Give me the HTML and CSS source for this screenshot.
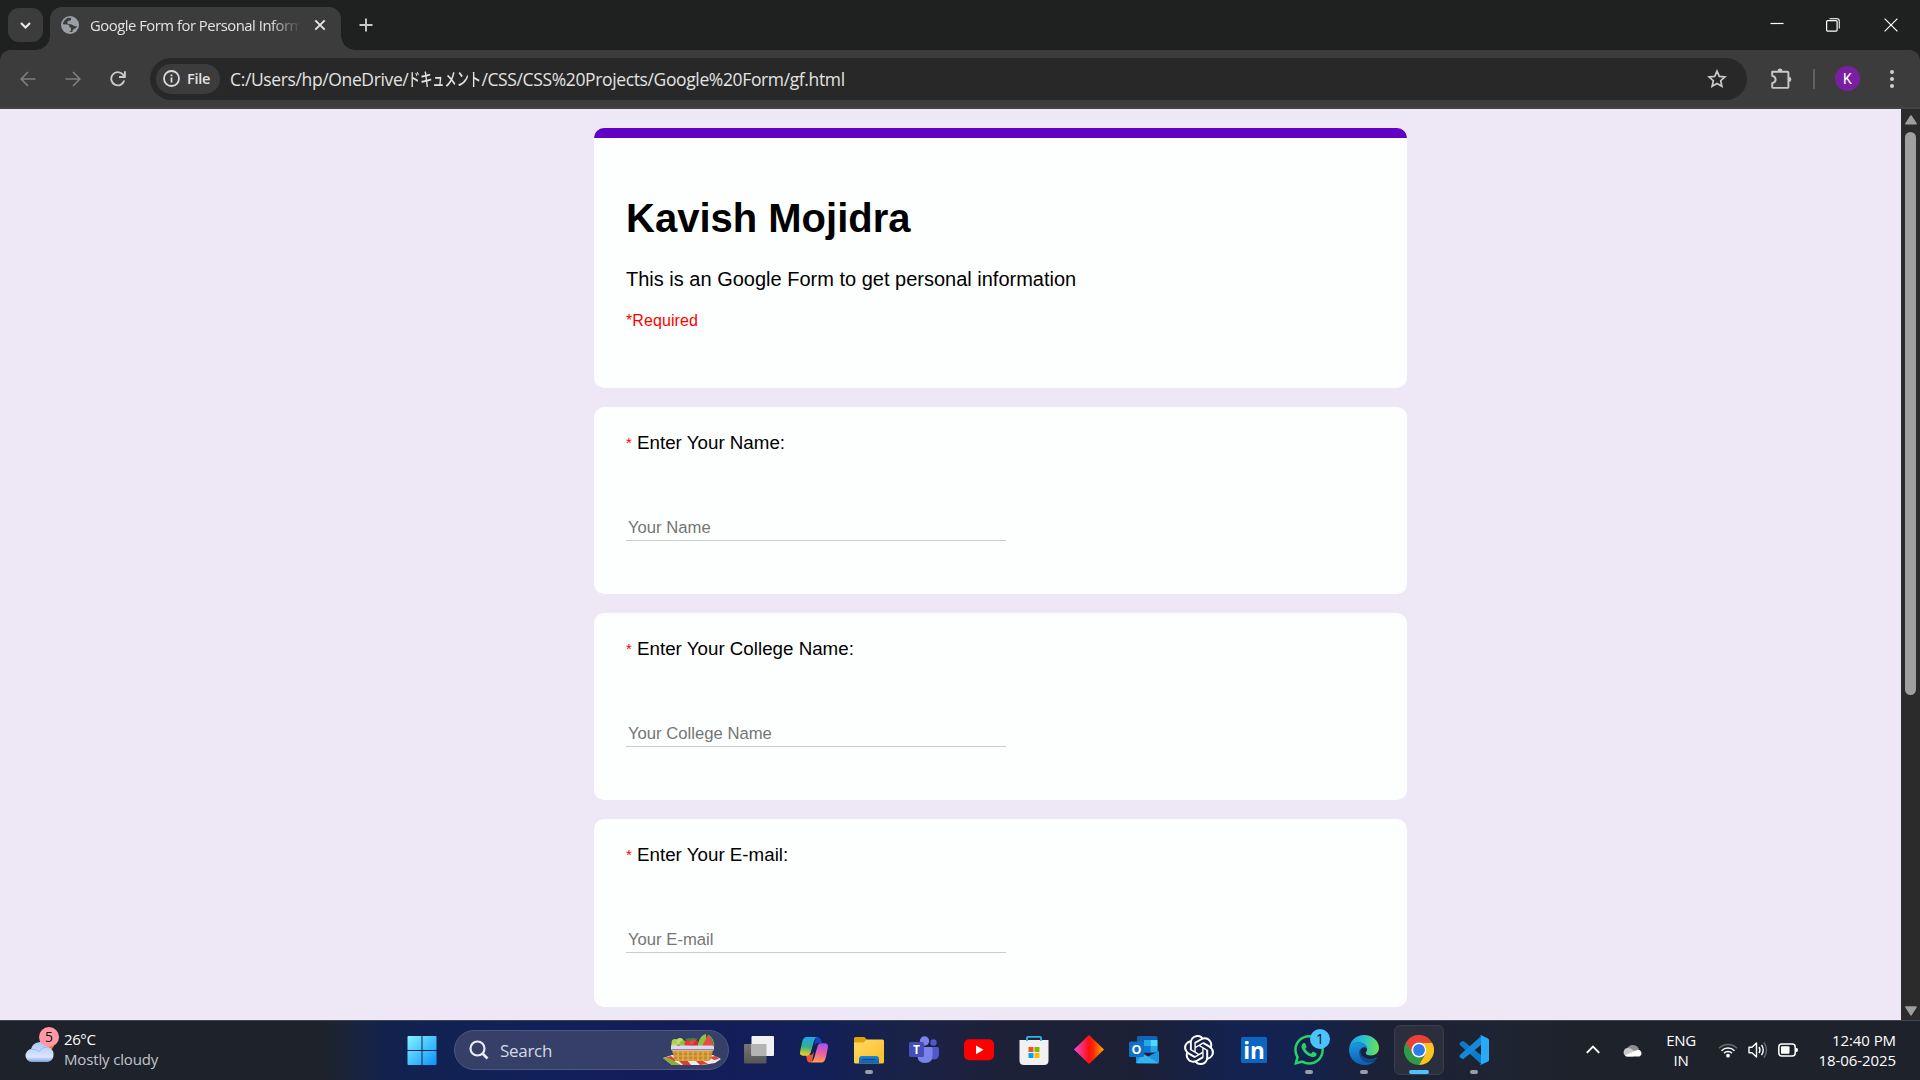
FILE: index.html
```html
<!DOCTYPE html>
<html lang="en">
<head>
<meta charset="utf-8">
<title>Google Form for Personal Information</title>
<link rel="stylesheet" href="styles.css">
</head>
<body>
<div class="screen">
  <header class="tabstrip">
    <div class="tab-search"><svg width="35" height="34" viewBox="0 0 35 34"><path d="M13 15l4.500 4.500 4.500-4.500" fill="none" stroke="#e8e8e8" stroke-width="2.200"/></svg></div>
    <div class="tab">
      <svg class="globe" width="18" height="18" viewBox="0 0 18 18"><circle cx="9" cy="9" r="9" fill="#9aa0a8"/><path d="M7.500 1.800C4.500 2.500 2 5.500 1.900 8.300L6.500 8.600c1.600.2 2 1.200 1.800 2.400L10 12v2c0 1.200-1 1.700-2.200 1.900 1 .3 2.500.2 3.600-.2.300-1.800 1-2.700 2.600-3.200 1.300-.5 1.800-1.200 2-2.500-1.600.6-2.700.4-3.700-.4-1.100-.9-2-1.200-3.500-1.300C7 8.200 6.200 7.500 6.400 6.300c.2-1.300 1.300-1.400 2.300-1.500C10.200 4.600 10.300 3 9.800 1.700z" fill="#3c3c3c"/></svg>
      <span class="tab-title">Google Form for Personal Inform</span>
      <svg class="tab-close" width="12" height="12" viewBox="0 0 12 12"><path d="M1.300 1.300l9.400 9.400M10.700 1.300l-9.400 9.400" stroke="#e6e6e6" stroke-width="1.900"/></svg>
    </div>
    <svg class="new-tab" width="14" height="14" viewBox="0 0 14 14"><path d="M7 .5v13M.5 7h13" stroke="#c9c9c9" stroke-width="1.900"/></svg>
    <div class="window-buttons">
      <svg width="14" height="14" viewBox="0 0 14 14"><path d="M.5 5.500h13" stroke="#fff" stroke-width="1.200"/></svg>
      <svg width="14" height="14" viewBox="0 0 14 14"><rect x=".6" y="2.600" width="10.500" height="10.500" rx="1" fill="none" stroke="#fff" stroke-width="1.200"/><path d="M3.500.7h7.300q2.500 0 2.500 2.500v7.300" fill="none" stroke="#ddd" stroke-width="1.200"/></svg>
      <svg width="14" height="14" viewBox="0 0 14 14"><path d="M.6.6l12.800 12.800M13.400.6L.6 13.400" stroke="#fff" stroke-width="1.200"/></svg>
    </div>
  </header>

  <div class="toolbar">
    <svg class="nav-icon" width="16" height="16" viewBox="0 0 16 16"><path d="M15.500 8H1.500M8 1L1.200 8 8 15" fill="none" stroke="#7d7d7d" stroke-width="1.700"/></svg>
    <svg class="nav-icon" width="16" height="16" viewBox="0 0 16 16"><path d="M.5 8h14M8 1l6.800 7L8 15" fill="none" stroke="#7d7d7d" stroke-width="1.700"/></svg>
    <svg class="nav-icon" width="16" height="16" viewBox="0 0 16 16"><path d="M14.200 9.500A6.600 6.600 0 1 1 12.800 3.400L14.800 5.600M14.900.3v5.700H9" fill="none" stroke="#c9c9c9" stroke-width="1.900"/></svg>
    <div class="omnibox">
      <div class="file-chip">
        <svg width="17" height="17" viewBox="0 0 17 17"><circle cx="8.500" cy="8.500" r="7.500" fill="none" stroke="#dcdcdc" stroke-width="1.800"/><path d="M8.500 7.400v5M8.500 4.400v1.900" stroke="#dcdcdc" stroke-width="1.800"/></svg>
        <span>File</span>
      </div>
      <div class="url"><span class="url-a">C:/Users/hp/OneDrive/</span><span class="url-jp">ドキュメント</span><span class="url-b">/CSS/CSS%20Projects/Google%20Form/gf.html</span></div>
      <svg class="star" width="20" height="20" viewBox="0 0 20 20"><path d="M10 2.200l2.300 5.200 5.600.5-4.200 3.800 1.200 5.600L10 14.400l-4.900 2.900 1.200-5.600L2.100 7.900l5.600-.5z" fill="none" stroke="#c9c9c9" stroke-width="1.700"/></svg>
    </div>
    <svg class="extensions" width="22" height="22" viewBox="0 0 22 22"><path d="M2.200 3.800h15.200q1 0 1 1v14.100q0 1-1 1H3.200q-1 0-1-1v-3.800q3.400-.7 3.400-3.600t-3.400-3.600V4.800z" fill="none" stroke="#c9c9c9" stroke-width="1.900" stroke-linejoin="round"/><path d="M7.600 3a2.400 2.400 0 0 1 4.800 0zM19 9a2.400 2.400 0 0 1 0 4.800z" fill="#c9c9c9"/></svg>
    <span class="divider"></span>
    <span class="avatar">K</span>
    <svg class="menu" width="4" height="18" viewBox="0 0 4 18"><g fill="#d0d0d0"><circle cx="2" cy="2" r="2"/><circle cx="2" cy="9" r="2"/><circle cx="2" cy="16" r="2"/></g></svg>
  </div>

  <div class="viewport">
    <main class="form">
      <section class="card intro">
        <h1>Kavish Mojidra</h1>
        <p class="about">This is an Google Form to get personal information</p>
        <p class="required">*Required</p>
      </section>
      <section class="card question">
        <label for="n"><span class="mark">*</span> Enter Your Name:</label>
        <input id="n" type="text" placeholder="Your Name">
      </section>
      <section class="card question">
        <label for="c"><span class="mark">*</span> Enter Your College Name:</label>
        <input id="c" type="text" placeholder="Your College Name">
      </section>
      <section class="card question">
        <label for="e"><span class="mark">*</span> Enter Your E-mail:</label>
        <input id="e" type="text" placeholder="Your E-mail">
      </section>
    </main>
    <div class="scrollbar">
      <svg width="12" height="10" viewBox="0 0 12 10"><path d="M6 1l5 7.800H1z" fill="#9f9f9f" stroke="#9f9f9f" stroke-width="1.600" stroke-linejoin="round"/></svg>
      <div class="thumb"></div>
      <svg class="down" width="12" height="10" viewBox="0 0 12 10"><path d="M1 1h10L6 8.800z" fill="#9f9f9f" stroke="#9f9f9f" stroke-width="1.600" stroke-linejoin="round"/></svg>
    </div>
  </div>

  <footer class="taskbar">
    <div class="weather">
      <div class="weather-icon">
        <svg width="34" height="36" viewBox="0 0 34 36">
          <defs><linearGradient id="cl" x1="0" y1="0" x2="0" y2="1"><stop offset="0" stop-color="#a9c6f8"/><stop offset=".75" stop-color="#dbe6fb"/><stop offset="1" stop-color="#7a9de0"/></linearGradient></defs>
          <circle cx="22" cy="17" r="7" fill="#f07818"/>
          <path d="M6.500 35a6.500 6.500 0 0 1-.5-12.900A9 9 0 0 1 22.800 20 7.800 7.800 0 0 1 23 35z" fill="url(#cl)"/>
          <path d="M6 22.200q5-.6 8 2.600 3-5 8.800-4.800" fill="none" stroke="#86a9ec" stroke-width="1" opacity=".7"/>
        </svg>
        <span class="alert">5</span>
      </div>
      <div class="weather-text"><span class="temp">26°C</span><span class="sky">Mostly cloudy</span></div>
    </div>

    <div class="apps">
      <div class="app"><svg width="30" height="30" viewBox="0 0 30 30"><defs><linearGradient id="win" x1="0" y1="0" x2="1" y2="1"><stop offset="0" stop-color="#83f3ff"/><stop offset="1" stop-color="#0a93fb"/></linearGradient></defs><path d="M.5 2q0-1 1-1h13v14H.5zM15.500 1h13q1 0 1 1v13h-14zM.5 16h14v14h-13q-1 0-1-1zM15.500 16h14v13q0 1-1 1h-13z" fill="url(#win)"/></svg></div>
      <div class="search">
        <svg class="lens" width="20" height="20" viewBox="0 0 20 20"><circle cx="8.500" cy="8.500" r="7" fill="none" stroke="#e8ebf2" stroke-width="2.200"/><path d="M13.500 13.500l5 5" stroke="#e8ebf2" stroke-width="2.600"/></svg>
        <span>Search</span>
        <svg class="basket" width="58" height="32" viewBox="0 0 58 32">
          <path d="M0 24l9-3h41l8 4-6 4-12 2H22L9 31z" fill="#f4e9e6"/>
          <path d="M1 24l7-2 5 4-4 3zM16 27l8-1 4 5h-8zM33 27h7l5 3-8 1zM46 23l7-1 3 3-5 1z" fill="#d8423c"/>
          <path d="M0 24l9 7 9 0-12-7z" fill="#8aad34"/>
          <circle cx="12" cy="8.500" r="3.500" fill="#a9cf4b"/><circle cx="17" cy="7.500" r="3.500" fill="#c0dd68"/><circle cx="20" cy="10" r="3.500" fill="#94c13c"/><circle cx="11" cy="12" r="3" fill="#bcda62"/>
          <circle cx="25" cy="9.500" r="3.500" fill="#e23b33"/><circle cx="30" cy="7.500" r="3.500" fill="#f04a3e"/><circle cx="34" cy="10.500" r="3.500" fill="#d92c2c"/><path d="M22 5l4-1 2 1 2-1 2 1 3-1-2 2.500h-8z" fill="#38883a"/>
          <path d="M35 10q2-9 8-10l1 13h-9z" fill="#8ac43c"/><path d="M39 12L45 1q5 4 5 11z" fill="#e94a48"/><path d="M45 1q6 4 5.500 11" fill="none" stroke="#58a43c" stroke-width="1.500"/>
          <path d="M9 16h41l-2 9q-1 2-3 2H14q-2 0-3-2z" fill="#d39a38"/><path d="M10 20h39M11 24h37" stroke="#b87a24" stroke-width="1"/><path d="M15 17v9M20 17v10M25 17v10M30 17v10M35 17v10M40 17v10M45 17v9" stroke="#e2b152" stroke-width="1.400"/>
          <rect x="8" y="11.500" width="43" height="5" rx="1.500" fill="#dcd8ef"/><path d="M8.500 15.500h42" stroke="#8f80c8"/>
        </svg>
      </div>
      <div class="app"><svg width="30" height="30" viewBox="0 0 30 30"><defs><linearGradient id="tvb" x1="0" y1="0" x2="0" y2="1"><stop offset="0" stop-color="#777"/><stop offset="1" stop-color="#555"/></linearGradient></defs><rect x="0" y="9" width="22.500" height="19.500" rx="1" fill="url(#tvb)"/><rect x="7.500" y="1" width="22.500" height="20" rx="1" fill="#f1f1f3"/><path d="M7.500 9h15v12h-14q-1 0-1-1z" fill="#b4b4b4"/></svg></div>
      <div class="app"><svg width="30" height="30" viewBox="0 0 30 30">
        <defs><linearGradient id="cpa" x1=".3" y1="0" x2=".2" y2="1"><stop offset="0" stop-color="#1ba7e8"/><stop offset=".5" stop-color="#35b08a"/><stop offset="1" stop-color="#f5d31e"/></linearGradient><linearGradient id="cpb" x1=".6" y1="0" x2=".4" y2="1"><stop offset="0" stop-color="#a450f0"/><stop offset=".5" stop-color="#ec5f9e"/><stop offset="1" stop-color="#fca350"/></linearGradient></defs>
        <path d="M17 2h1.500q2.500 0 3.300 2.500L23 8h-4q-3 0-4 4z" fill="#1447bd"/><path d="M13 27.500h-2q-2.500 0-3-2.500L7 20h4q3 0 4-4z" fill="#ef5532"/>
        <path d="M7.500 2H18q-2 .5-3 4l-3.500 12q-.7 2.700-3.500 2.700H4Q0 20.500 1.200 16L3 7.500Q4.200 2 7.500 2z" fill="url(#cpa)"/>
        <path d="M22.500 27.500H12q2-.5 3-4l3.500-12q.7-3.300 3.500-3.300h4q4 .3 2.800 5L27 22q-1.200 5.500-4.500 5.500z" fill="url(#cpb)"/></svg></div>
      <div class="app"><svg width="30" height="30" viewBox="0 0 30 30"><defs><linearGradient id="fo" x1="0" y1="0" x2="1" y2="1"><stop offset="0" stop-color="#ffda62"/><stop offset="1" stop-color="#fbbd28"/></linearGradient><linearGradient id="fb" x1="0" y1="0" x2="0" y2="1"><stop offset="0" stop-color="#1a86dc"/><stop offset="1" stop-color="#0d5fae"/></linearGradient></defs><path d="M0 3.500Q0 2 1.500 2h8q1 0 2 1L13 5h-1v6H0z" fill="#e2a008"/><path d="M0 7.500h9.500l3-3H28.500q1.500 0 1.500 1.500v21q0 1.500-1.500 1.500h-27Q0 28.500 0 27z" fill="url(#fo)"/><path d="M5 28.500V24q0-3 3-3h14q3 0 3 3v4.500z" fill="url(#fb)"/><path d="M8.500 24.500h13" stroke="#0b4883" stroke-width="1.200"/></svg><i class="running"></i></div>
      <div class="app"><svg width="30" height="30" viewBox="0 0 30 30"><circle cx="24.500" cy="7.500" r="3.200" fill="#5059c9"/><path d="M20 12h8.500q1.500 0 1.500 1.500V19q0 5.500-5.500 5.500-3 0-4.500-2z" fill="#5059c9"/><circle cx="15.500" cy="6" r="4.700" fill="#7b83eb"/><path d="M10 12h12q1.500 0 1.500 1.500V21q0 7-7.500 7t-7.500-7z" fill="#7b83eb"/><rect x="0" y="7" width="15" height="15" rx="1.500" fill="#464eb8"/><text x="7.500" y="19" text-anchor="middle" class="glyph" font-size="12" font-weight="700">T</text></svg></div>
      <div class="app"><svg width="30" height="30" viewBox="0 0 30 30"><rect x="0" y="4.200" width="30" height="21" rx="5" fill="#f00"/><path d="M12 10.500l7.500 4.300L12 19.200z" fill="#fff"/></svg></div>
      <div class="app"><svg width="30" height="30" viewBox="0 0 30 30"><path d="M8 8V2.500Q8 1.800 9 1.800h12q1 0 1 .7V8" fill="none" stroke="#28b8ea" stroke-width="1.800"/><path d="M.5 5h29v20.500q0 4.500-4.500 4.500H5Q.5 30 .5 25.500z" fill="#f1f1f3"/><path d="M8 6V5M22 6V5" stroke="#28b8ea" stroke-width="1.800"/><path d="M9.500 12h5v5h-5z" fill="#f25022"/><path d="M15.500 12h5v5h-5z" fill="#7fba00"/><path d="M9.500 18h5v5h-5z" fill="#00a4ef"/><path d="M15.500 18h5v5h-5z" fill="#ffb900"/></svg></div>
      <div class="app"><svg width="30" height="30" viewBox="0 0 30 30"><defs><linearGradient id="di"><stop offset="0" stop-color="#f04ae0"/><stop offset=".5" stop-color="#ff1010"/><stop offset=".65" stop-color="#fb2a08"/><stop offset="1" stop-color="#ffb000"/></linearGradient></defs><path d="M15 0l15 14.500L15 29 0 14.500z" fill="url(#di)"/></svg></div>
      <div class="app"><svg width="30" height="30" viewBox="0 0 30 30"><rect x="8" y="1" width="20.500" height="17" rx="1.500" fill="#0f64b8"/><path d="M8 5h7v6H8z" fill="#1066b5"/><path d="M15 5h6.500v6H15z" fill="#28a8ea"/><path d="M21.500 5h7v6h-7z" fill="#50d9ff"/><path d="M15 11h6.500v6H15z" fill="#0f78d4"/><path d="M21.500 11h7v6h-7z" fill="#28a8ea"/><path d="M7 16l11 6 12-6v11q0 1.500-1.500 1.500h-20Q7 28.500 7 27z" fill="#1c94e0"/><path d="M7 28l22.500.3L14 18.500z" fill="#35b4f0"/><rect x="0" y="6.500" width="15" height="15.500" rx="1.500" fill="#1070c8"/><text x="7.500" y="19" text-anchor="middle" class="glyph" font-size="12.500" font-weight="700">O</text></svg></div>
      <div class="app"><svg width="30" height="30" viewBox="0 0 24 24"><path fill="#fff" d="M22.2819 9.8211a5.9847 5.9847 0 0 0-.5157-4.9108 6.0462 6.0462 0 0 0-6.5098-2.9A6.0651 6.0651 0 0 0 4.9807 4.1818a5.9847 5.9847 0 0 0-3.9977 2.9 6.0462 6.0462 0 0 0 .7427 7.0966 5.98 5.98 0 0 0 .511 4.9107 6.051 6.051 0 0 0 6.5146 2.9001A5.9847 5.9847 0 0 0 13.2599 24a6.0557 6.0557 0 0 0 5.7718-4.2058 5.9894 5.9894 0 0 0 3.9977-2.9001 6.0557 6.0557 0 0 0-.7475-7.0729zm-9.022 12.6081a4.4755 4.4755 0 0 1-2.8764-1.0408l.1419-.0804 4.7783-2.7582a.7948.7948 0 0 0 .3927-.6813v-6.7369l2.02 1.1686a.071.071 0 0 1 .038.052v5.5826a4.504 4.504 0 0 1-4.4945 4.4944zm-9.6607-4.1254a4.4708 4.4708 0 0 1-.5346-3.0137l.142.0852 4.783 2.7582a.7712.7712 0 0 0 .7806 0l5.8428-3.3685v2.3324a.0804.0804 0 0 1-.0332.0615L9.74 19.9502a4.4992 4.4992 0 0 1-6.1408-1.6464zM2.3408 7.8956a4.485 4.485 0 0 1 2.3655-1.9728V11.6a.7664.7664 0 0 0 .3879.6765l5.8144 3.3543-2.0201 1.1685a.0757.0757 0 0 1-.071 0l-4.8303-2.7865A4.504 4.504 0 0 1 2.3408 7.872zm16.5963 3.8558L13.1038 8.364 15.1192 7.2a.0757.0757 0 0 1 .071 0l4.8303 2.7913a4.4944 4.4944 0 0 1-.6765 8.1042v-5.6772a.79.79 0 0 0-.407-.667zm2.0107-3.0231l-.142-.0852-4.7735-2.7818a.7759.7759 0 0 0-.7854 0L9.409 9.2297V6.8974a.0662.0662 0 0 1 .0284-.0615l4.8303-2.7866a4.4992 4.4992 0 0 1 6.6802 4.66zM8.3065 12.863l-2.02-1.1638a.0804.0804 0 0 1-.038-.0567V6.0742a4.4992 4.4992 0 0 1 7.3757-3.4537l-.142.0805L8.704 5.459a.7948.7948 0 0 0-.3927.6813zm1.0976-2.3654l2.602-1.4998 2.6069 1.4998v2.9994l-2.5974 1.4997-2.6067-1.4997Z"/></svg></div>
      <div class="app"><svg width="26" height="26" viewBox="0 0 26 26" overflow="visible"><rect width="26" height="26" rx="1.500" fill="#0a66c2"/><text x="13" y="22" text-anchor="middle" class="glyph" font-size="22.500" font-weight="700">in</text></svg></div>
      <div class="app"><svg width="30" height="30" viewBox="0 0 24 24"><path fill="#25d366" d="M17.472 14.382c-.297-.149-1.758-.867-2.03-.967-.273-.099-.471-.148-.67.15-.197.297-.767.966-.94 1.164-.173.199-.347.223-.644.075-.297-.15-1.255-.463-2.39-1.475-.883-.788-1.480-1.761-1.653-2.059-.173-.297-.018-.458.13-.606.134-.133.298-.347.446-.52.149-.174.198-.298.298-.497.099-.198.05-.371-.025-.52-.075-.149-.669-1.612-.916-2.207-.242-.579-.487-.5-.669-.51-.173-.008-.371-.01-.57-.01-.198 0-.52.074-.792.372-.272.297-1.040 1.016-1.040 2.479 0 1.462 1.065 2.875 1.213 3.074.149.198 2.096 3.200 5.077 4.487.709.306 1.262.489 1.694.625.712.227 1.360.195 1.871.118.571-.085 1.758-.719 2.006-1.413.248-.694.248-1.289.173-1.413-.074-.124-.272-.198-.57-.347m-5.421 7.403h-.004a9.870 9.870 0 0 1-5.031-1.378l-.361-.214-3.741.982.998-3.648-.235-.374a9.860 9.860 0 0 1-1.510-5.260c.001-5.450 4.436-9.884 9.888-9.884 2.640 0 5.122 1.030 6.988 2.898a9.825 9.825 0 0 1 2.893 6.994c-.003 5.450-4.437 9.884-9.885 9.884m8.413-18.297A11.815 11.815 0 0 0 12.050 0C5.495 0 .16 5.335.157 11.892c0 2.096.547 4.142 1.588 5.945L.057 24l6.305-1.654a11.882 11.882 0 0 0 5.683 1.448h.005c6.554 0 11.890-5.335 11.893-11.893a11.821 11.821 0 0 0-3.480-8.413z"/></svg><span class="badge">1</span><i class="running"></i></div>
      <div class="app"><svg width="30" height="30" viewBox="0 0 30 30">
        <defs><linearGradient id="e1" x1="0" y1=".3" x2="1" y2=".4"><stop offset="0" stop-color="#1a9be0"/><stop offset=".5" stop-color="#2cc3d2"/><stop offset="1" stop-color="#6be04c"/></linearGradient><linearGradient id="e2" x1="0" y1="0" x2=".3" y2="1"><stop offset="0" stop-color="#1b9de2"/><stop offset="1" stop-color="#0c5fb4"/></linearGradient></defs>
        <path d="M.3 12.500C1.500 5 7.500 0 15 0c8.500 0 15 6 15 13 0 4.500-3.500 7.500-8 7.500-3.500 0-5.300-1.300-5.300-2.500 0-1 1.400-1.500 1.400-4 0-3.500-3.500-6.500-8-6.500C5.500 7.500 2 9.500.3 12.500z" fill="url(#e1)"/>
        <path d="M.1 14C.5 10 4.500 7.500 10 7.500c5 0 8.100 3 8.100 6.500-1-1.500-2.500-2-4-1.500C10 14 9.300 21 14 25c3.500 3 8.500 3 13 .3C24.500 28.500 20 30 15.500 30 6.500 30-.5 23 .1 14z" fill="url(#e2)"/>
        <path d="M10.500 15.500C9.500 22 13 27 19 27.200c3.500 0 7-1.500 9-3.600.6-.8 0-1.400-.8-1-6.500 3-14.200.6-15.500-4.600-.4-1.500-.2-3 .4-4.300-.8.300-1.500 1-1.600 1.800z" fill="#114a8f"/></svg><i class="running"></i></div>
      <div class="app active"><svg width="30" height="30" viewBox="0 0 30 30"><path d="M2 7.500A15 15 0 0 0 15 30l6.500-11.300L15 15z" fill="#2f9a48"/><path d="M28 7.500A15 15 0 0 1 15 30l6.500-11.300Q24 13 19 8.500L15 7.500z" fill="#fcc31e"/><path d="M2 7.500A15 15 0 0 1 28 7.500H15q-5.500.5-7 5.500v4.500z" fill="#ea4335"/><circle cx="15" cy="15" r="7.500" fill="#fff"/><circle cx="15" cy="15" r="5.900" fill="#2f7bea"/></svg><i class="running wide"></i></div>
      <div class="app"><svg width="30" height="30" viewBox="0 0 30 30"><path d="M1 7.800l2.200-1.600q.8-.5 1.600.1L22.500 20.500v8.800L.8 10q-.8-1.200.2-2.200z" fill="#0b7cc8"/><path d="M1 22.200l2.200 1.600q.8.500 1.600-.1L22.500 9.500V.7L.8 20q-.8 1.200.2 2.200z" fill="#1489d6"/><path d="M22.200.2l6.800 3.200q1 .5 1 1.700v19.800q0 1.200-1 1.700l-6.800 3.200q-1 .3-1.600-.5 1.400.8 1.400-1V1.700q0-1.600-1.400-1 .8-.8 1.600-.5z" fill="#2aa9f5"/></svg><i class="running"></i></div>
    </div>

    <div class="tray">
      <svg class="chev" width="14" height="9" viewBox="0 0 14 9"><path d="M.8 7.800L7 1.600l6.200 6.200" fill="none" stroke="#fff" stroke-width="1.900"/></svg>
      <svg class="cloud" width="20" height="14" viewBox="0 0 20 14"><path d="M4 5.500a6.500 6.500 0 0 1 12 1l-6 4z" fill="#8b8d92"/><path d="M4 13.500a4.300 4.300 0 0 1 1-8.500c3 0 4.500 1.500 8 4.500l-3 4z" fill="#c8c9cc"/><path d="M2 12.500L14 7a3.500 3.500 0 0 1 2.500 6.500H4q-1.300 0-2-1z" fill="#fff"/></svg>
      <div class="lang"><span>ENG</span><span>IN</span></div>
      <div class="status">
        <svg width="20" height="16" viewBox="0 0 20 16"><g fill="none" stroke="#fff" stroke-width="1.500"><path d="M1 6.300a12.500 12.500 0 0 1 18 0" stroke="#676a72"/><path d="M3.500 8.700a9.200 9.200 0 0 1 13 0"/><path d="M6 11.200a5.700 5.700 0 0 1 8 0"/></g><circle cx="10" cy="13.700" r="1.900" fill="#fff"/></svg>
        <svg width="20" height="18" viewBox="0 0 20 18"><path d="M1 6.200h3L8.500 2v14L4 11.800H1z" fill="none" stroke="#fff" stroke-width="1.400" stroke-linejoin="round"/><path d="M11 6q2 3 0 6M13.500 3.800q3.500 5.200 0 10.400" fill="none" stroke="#fff" stroke-width="1.400"/><path d="M16 1.500q5 7.500 0 15" fill="none" stroke="#676a72" stroke-width="1.400"/></svg>
        <svg width="20" height="14" viewBox="0 0 20 14"><rect x=".8" y="1" width="16.400" height="12" rx="3" fill="none" stroke="#fff" stroke-width="1.500"/><rect x="3" y="3.200" width="8.500" height="7.600" rx="1" fill="#fff"/><path d="M17.500 5h1q1.500 0 1.500 2t-1.500 2h-1z" fill="#fff"/></svg>
      </div>
      <div class="clock"><span class="time">12:40 PM</span><span>18-06-2025</span></div>
    </div>
  </footer>
</div>
</body>
</html>
```
FILE: styles.css
```css
* { box-sizing: border-box; }
html, body { margin: 0; height: 100%; overflow: hidden; }
body { font-family: "Open Sans", "Noto Sans", "Noto Sans CJK JP", sans-serif; background: #1f2120; }
svg { display: block; flex: none; }
.screen { width: 1920px; height: 1080px; display: grid; grid-template-rows: 50px 59px 911px 60px; }

/* Tab strip */
.tabstrip { display: flex; align-items: flex-start; background: #1f2120; }
.tab-search { width: 35px; height: 34px; margin: 8px 0 0 8px; border-radius: 11px; background: #3c3c3c; }
.tab {
  position: relative; display: flex; align-items: center; width: 291px; height: 43px;
  margin: 7px 0 0 7px; padding: 0 15px 7px 11px; border-radius: 12px 12px 0 0; background: #3c3c3c;
}
.tab::before, .tab::after { content: ""; position: absolute; bottom: 0; width: 14px; height: 14px; }
.tab::before { left: -14px; background: radial-gradient(circle at 0 0, transparent 13.500px, #3c3c3c 14px); }
.tab::after { right: -14px; background: radial-gradient(circle at 100% 0, transparent 13.500px, #3c3c3c 14px); }
.tab-title {
  width: 209px; margin-left: 11px; overflow: hidden; white-space: nowrap;
  font-size: 14.800px; line-height: 20px; letter-spacing: -.47px; color: #e3e3e3;
  -webkit-mask-image: linear-gradient(90deg, #000 180px, transparent 211px);
  mask-image: linear-gradient(90deg, #000 180px, transparent 211px);
}
.tab-close { margin-left: auto; }
.new-tab { margin: 18px 0 0 18px; }
.window-buttons { display: flex; gap: 42px; margin: 18px 22px 0 auto; }
.window-buttons svg:nth-child(2) { margin-right: 2px; }

/* Toolbar */
.toolbar { display: flex; align-items: center; padding: 0 26px 0 20px; background: #3c3c3c; border-radius: 10px 10px 0 0; border-bottom: 2px solid #444; }
.nav-icon { margin-right: 29px; }
.nav-icon:nth-of-type(3) { margin-right: 24px; }
.omnibox { display: flex; align-items: center; width: 1597px; height: 42px; padding: 0 20px 0 6px; border-radius: 21px; background: #282828; }
.file-chip { display: flex; align-items: center; gap: 7px; width: 64px; height: 30px; padding-left: 7px; border-radius: 15px; background: #3c3c3c; font-size: 14.500px; font-weight: 600; letter-spacing: -.3px; color: #e3e3e3; }
.url { display: flex; margin-left: 10px; padding-top: 1px; font-size: 17.500px; line-height: 24px; color: #e3e3e3; white-space: nowrap; }
.url-a, .url-b { letter-spacing: -.37px; }
.url-jp { width: 73px; transform: scaleX(.67); transform-origin: 0 50%; font-size: 18.200px; font-weight: 500; }
.star { margin-left: auto; }
.extensions { margin-left: 23px; }
.divider { width: 2px; height: 20px; margin-left: 21px; background: #606060; }
.avatar { display: grid; place-items: center; width: 25px; height: 25px; margin-left: 20px; border-radius: 50%; background: #7b1fa2; color: #fff; font: 14px Roboto, sans-serif; }
.menu { margin-left: auto; }

/* Page */
.viewport { display: flex; background: #ede7f6; overflow: hidden; }
.form { flex: 1; padding: 18.750px 0 0 594px; font-family: "Liberation Sans", Arial, sans-serif; color: #000; }
.card { width: 813px; margin-bottom: 18.750px; padding: 0 32px; border-radius: 10px; background: #fdfffe; }
.intro { height: 260px; padding-top: 55px; border-top: 10px solid #6200c3; }
.intro h1 { margin: 0; font-size: 40px; line-height: 50px; }
.about { margin: 24px 0 0; font-size: 20px; line-height: 24px; }
.required { margin: 20px 0 0; font-size: 16px; line-height: 20px; letter-spacing: .08px; color: #f00; }
.question { display: flex; flex-direction: column; height: 187.500px; padding-top: 24px; }
.question label { font-size: 18.750px; line-height: 24px; }
.mark { color: #f00; font-size: 15px; line-height: 1; vertical-align: 1.500px; }
.question input { width: 380px; height: 25px; margin-top: 61px; padding: 1px 2px; border: 0; border-bottom: 1px solid #ccc; background: transparent; font: 16.670px "Liberation Sans", Arial, sans-serif; }
.question input::placeholder { color: #757575; }
.scrollbar { display: flex; flex-direction: column; align-items: center; width: 19px; padding: 6px 0 4px; background: #2b2b2b; }
.thumb { width: 11px; height: 563px; margin-top: 7px; border-radius: 6px; background: #9f9f9f; }
.down { margin-top: auto; }

/* Taskbar */
.taskbar {
  display: flex; align-items: stretch; border-top: 1px solid #40454f; color: #fff;
  background: linear-gradient(90deg, #1e222b 0, #1e222b 320px, #1a2438 345px, #12224f 390px, #12205a 560px, #141c5a 650px, #122058 820px, #192248 900px, #1d2138 1000px, #1c2035 1140px, #13224f 1230px, #13224f 1300px, #1b2136 1380px, #1e2432 1500px, #1e222b 1580px);
}
.weather { display: flex; width: 395px; padding-left: 25px; }
.weather-icon { position: relative; width: 34px; height: 36px; margin-top: 6px; }
.alert { position: absolute; left: 14px; top: 0; width: 20px; height: 20px; border-radius: 50%; background: #ff99a4; color: #111; font-size: 14px; line-height: 20px; text-align: center; }
.weather-text { display: flex; flex-direction: column; margin: 8px 0 0 5px; font-size: 15px; line-height: 20px; }
.temp { letter-spacing: -.4px; }
.sky { letter-spacing: -.15px; color: #c3c5ca; }
.apps { display: flex; align-items: center; height: 58px; }
.app { position: relative; display: grid; place-items: center; width: 55px; height: 58px; padding-right: 1px; }
.app.active::before { content: ""; position: absolute; inset: 4px 3px 4px 2px; border: 1px solid #3a3d4a; border-radius: 6px; background: #2b2e3c; }
.app.active svg { position: relative; }
.search { display: flex; align-items: center; width: 275px; height: 40px; margin: 0 3px 0 4px; padding: 0 7px 0 14px; border: 1px solid #4d5680; border-radius: 20px; background: #353f68; font-size: 17px; color: #d5d9e6; }
.search span { margin-left: 11px; letter-spacing: -.3px; }
.basket { margin-left: auto; }
.running { position: absolute; left: 23px; bottom: 5px; width: 8px; height: 4px; border-radius: 2px; background: #9a9ca6; }
.running.wide { left: 17px; width: 20px; background: #4cc2ff; }
.badge { position: absolute; left: 28px; top: 8px; width: 20px; height: 20px; border-radius: 50%; background: #4cc2ff; color: #111; font-size: 14px; line-height: 20px; text-align: center; }
.glyph { fill: #fff; font-family: "Open Sans", sans-serif; }
.tray { display: flex; align-items: center; height: 57px; margin-left: auto; padding-right: 24px; font-size: 15px; line-height: 20px; }
.cloud { margin-left: 23px; }
.lang { display: flex; flex-direction: column; align-items: center; width: 30px; margin-left: 23px; letter-spacing: -.3px; }
.status { display: flex; align-items: center; gap: 10px; margin-left: 22px; }
.clock { display: flex; flex-direction: column; align-items: flex-end; width: 78px; margin-left: 20px; letter-spacing: -.08px; white-space: nowrap; }
```
